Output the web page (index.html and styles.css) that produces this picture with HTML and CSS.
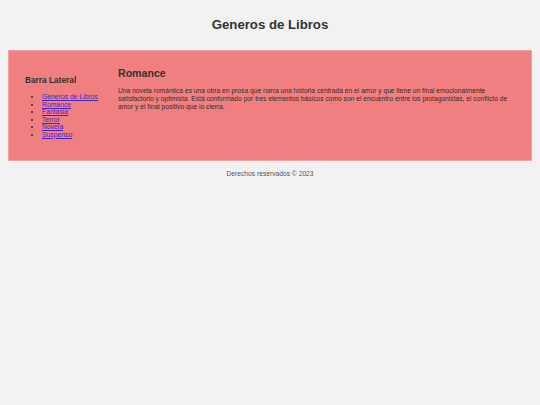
FILE: index.html
```html
<!DOCTYPE html>
<html lang="es">
<head>
<meta charset="utf-8">
<title>Generos de Libros</title>
<link rel="stylesheet" href="styles.css">
</head>
<body>
<header class="header">
  <h1 class="title">Generos de Libros</h1>
</header>
<div class="container">
  <aside class="sidebar">
    <h2 class="sidebar-title">Barra Lateral</h2>
    <ul class="nav">
      <li><a href="#">Generos de Libros</a></li>
      <li><a href="#">Romance</a></li>
      <li><a href="#">Fantasia</a></li>
      <li><a href="#">Terror</a></li>
      <li><a href="#">Novela</a></li>
      <li><a href="#">Suspenso</a></li>
    </ul>
  </aside>
  <main class="content">
    <h2 class="content-title">Romance</h2>
    <p class="text">Una novela romántica es una obra en prosa que narra una historia centrada en el amor y que tiene un final emocionalmente satisfactorio y optimista. Está conformado por tres elementos básicos como son el encuentro entre los protagonistas, el conflicto de amor y el final positivo que lo cierra.</p>
  </main>
</div>
<footer class="footer">Derechos reservados © 2023</footer>
</body>
</html>
```

FILE: styles.css
```css
html, body {
  background: #f2f2f2;
}
body {
  margin: 8px;
  font-family: "Liberation Sans", Arial, sans-serif;
  color: #333;
}
.header {
  height: 42px;
  display: flex;
  align-items: center;
  justify-content: center;
  padding-bottom: 9px;
  box-sizing: border-box;
}
.title {
  margin: 0;
  font-size: 13.2px;
  font-weight: bold;
  color: #333;
}
.container {
  display: flex;
  background: #f08080;
  border: 1px solid #f4a3a3;
  height: 109px;
}
.sidebar {
  width: 93px;
  padding: 24px 0 0 16px;
  box-sizing: content-box;
}
.sidebar-title {
  margin: 0 0 8px;
  font-size: 8.3px;
  font-weight: bold;
  color: #333;
}
.nav {
  margin: 0;
  padding-left: 17px;
  font-size: 6.8px;
  line-height: 7.5px;
}
.nav a {
  color: #4a22c8;
}
.content {
  flex: 1;
  padding: 16px 18px 0 0;
}
.content-title {
  margin: 0 0 8px;
  font-size: 10.6px;
  font-weight: bold;
  color: #333;
}
.text {
  margin: 0;
  font-size: 6.7px;
  line-height: 8px;
  color: #3a2a2a;
}
.footer {
  text-align: center;
  font-size: 6.7px;
  color: #555;
  margin-top: 9px;
}
```
